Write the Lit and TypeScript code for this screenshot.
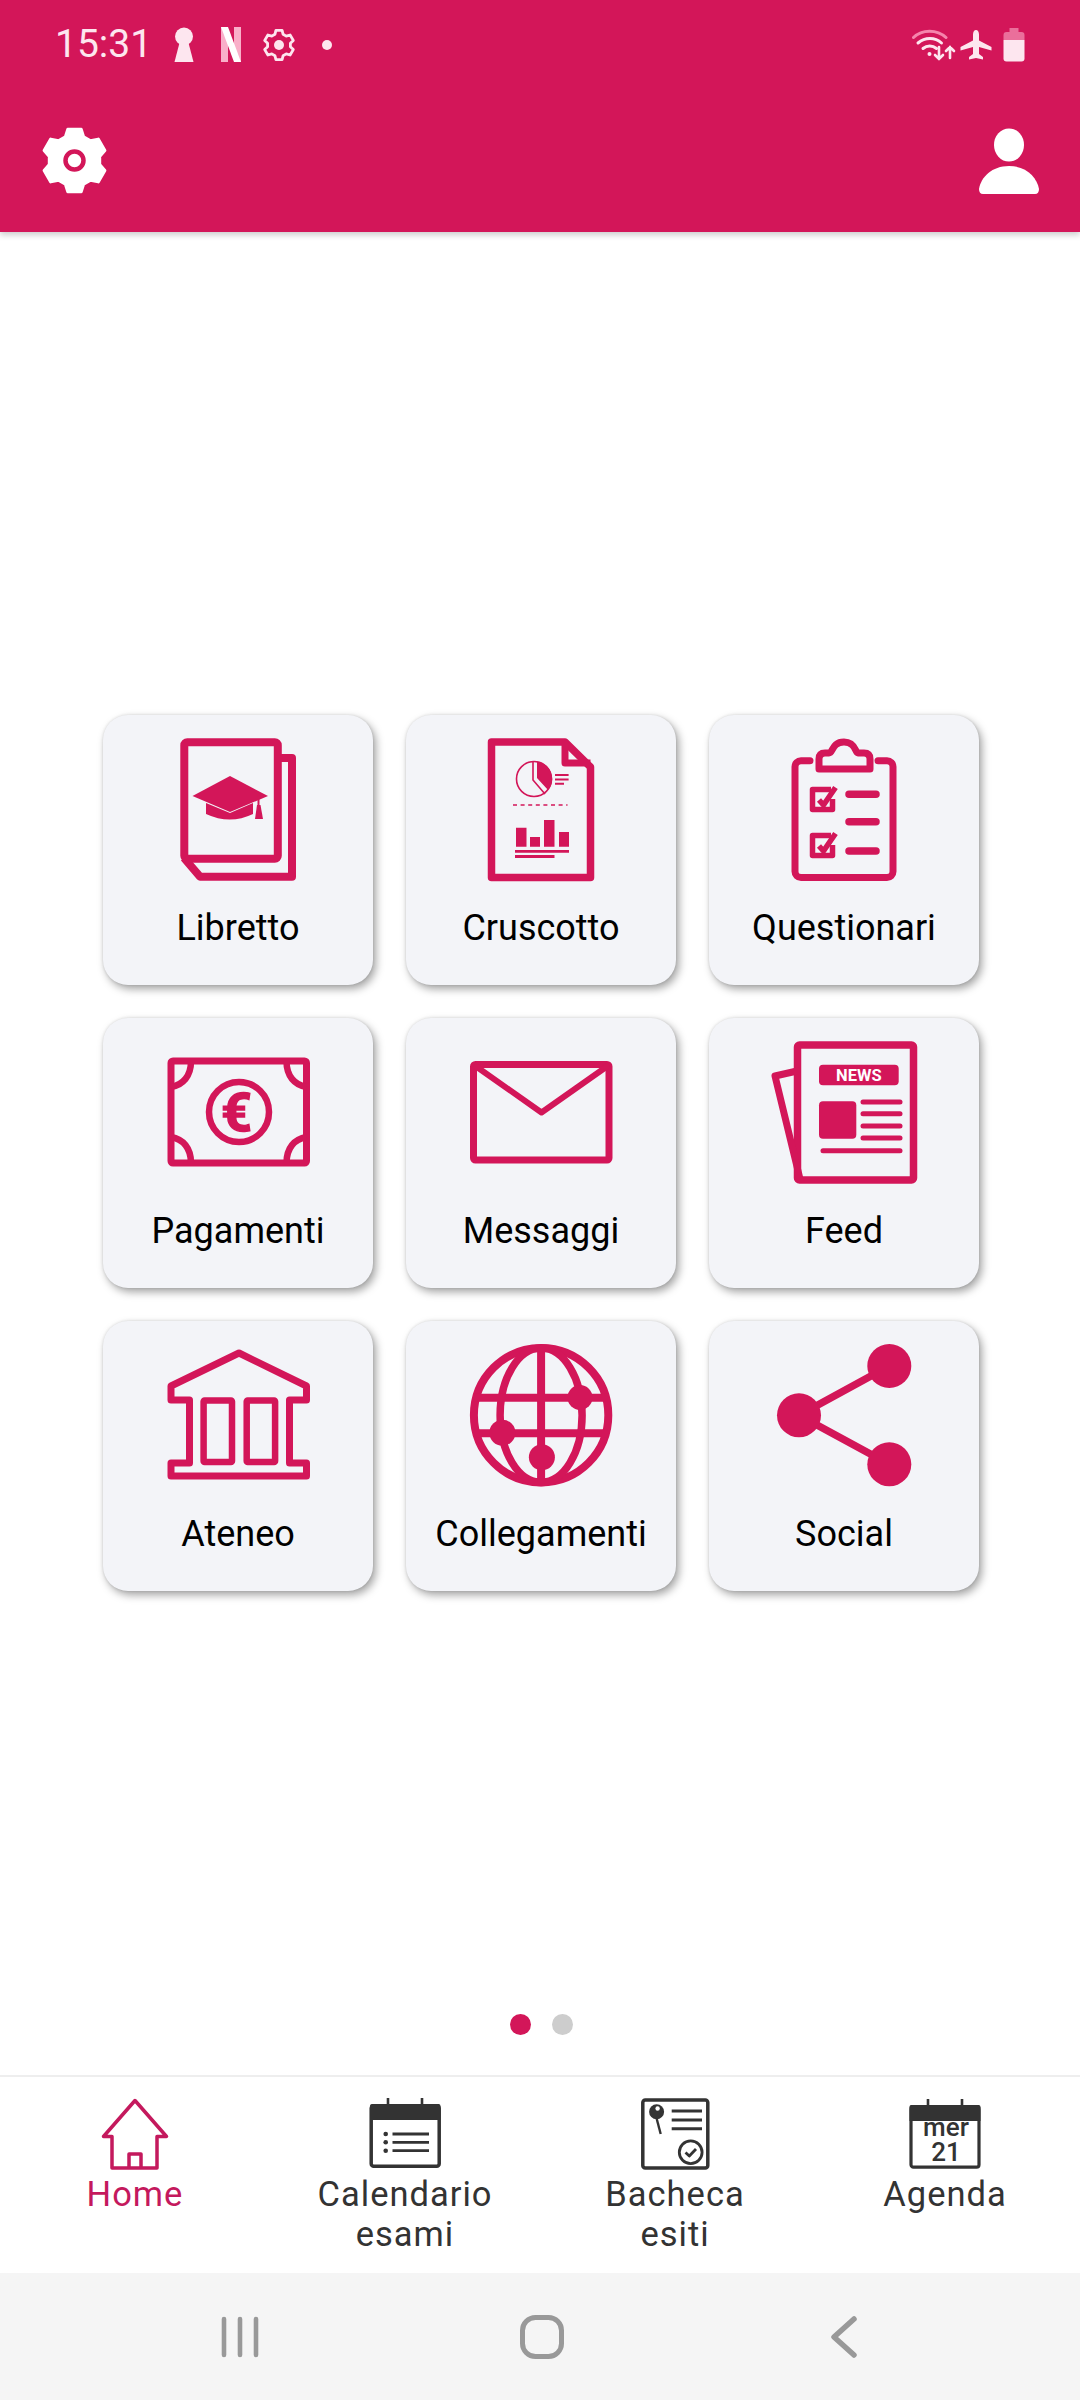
import { LitElement, html, css, svg } from 'lit';
import { customElement } from 'lit/decorators.js';

// six-lobed cog outline, used by the app bar and the status bar
function gearPath(cx: number, cy: number, tip: number, root: number) {
  const pts: string[] = [];
  for (let i = 0; i < 6; i++) {
    const a = -90 + i * 60;
    for (const [da, r] of [[-21, root], [-12, tip], [12, tip], [21, root]]) {
      const t = ((a + da) * Math.PI) / 180;
      pts.push(`${(cx + r * Math.cos(t)).toFixed(1)} ${(cy + r * Math.sin(t)).toFixed(1)}`);
    }
  }
  return 'M' + pts.join('L') + 'Z';
}

const liner = (x1: number, x2: number, y: number, w: number) =>
  svg`<path d="M${x1} ${y}H${x2}" stroke-width=${w} stroke-linecap="round" fill="none" />`;

const tiles = [
  {
    label: 'Libretto',
    icon: svg`
      <rect x="81.3" y="27.3" width="93.5" height="116.5" rx="3" class="o" stroke-width="8" />
      <path d="M178 43H189V161.7H97L81 143" class="o" stroke-width="8" />
      <path d="M127 61L165 81L127 97L89.5 81Z" class="f" />
      <path d="M103 88L127 98L150 88V99Q127 110 103 99Z" class="f" />
      <path d="M155.5 80V92" class="o" stroke-width="2" />
      <path d="M154 90H157.5L160 104H152Z" class="f" />`,
  },
  {
    label: 'Cruscotto',
    icon: svg`
      <path d="M159 27H85.5V162.5H184.5V52Z" class="o" stroke-width="7.5" />
      <path d="M159 27V48H184.5" class="o" stroke-width="7" />
      <circle cx="128" cy="64" r="17.5" class="o" stroke-width="1.6" />
      <path d="M131 46.5A17.5 17.5 0 0 1 142 75L131 63Z" class="f" />
      <path d="M127 47V65L139 79" class="o" stroke-width="1.6" />
      <path d="M149 60H162.6M149 64.5H162.6M149 68.7H158" class="o" stroke-width="2" />
      <path d="M107 90H161.5" class="o" stroke-width="1.4" stroke-dasharray="4 3.6" />
      <path d="M110 112.7H120.5V131.7H110ZM124 122H134V131.7H124ZM138 105H148.5V131.7H138ZM153 117H163V131.7H153Z" class="f" />
      <path d="M109 136.3H163M109 141.5H148.5" class="o" stroke-width="2.8" />`,
  },
  {
    label: 'Questionari',
    icon: svg`
      <path d="M101 45.8H92A6 6 0 0 0 86 51.8V156.5A6 6 0 0 0 92 162.5H178A6 6 0 0 0 184 156.5V51.8A6 6 0 0 0 178 45.8H169" class="o r" stroke-width="7" />
      <path d="M110 54H161V44Q161 38 155 38H149C146 38 147 27 135 27C123 27 124 38 120 38H116Q110 38 110 44Z" class="o r" stroke-width="7" />
      <path d="M122 74.5H103.5V94.5H123.5V84" class="o" stroke-width="5.5" />
      <path d="M110 85L114.5 90L126.5 72.5" class="o" stroke-width="5.5" />
      <path d="M122 120.5H103.5V140.5H123.5V130" class="o" stroke-width="5.5" />
      <path d="M110 131L114.5 136L126.5 118.5" class="o" stroke-width="5.5" />
      <path d="M140 79.3H167M140 106.7H167M140 136H167" class="o r" stroke-width="7.5" />`,
  },
  {
    label: 'Pagamenti',
    icon: svg`
      <rect x="68" y="43" width="135.5" height="102" rx="2" class="o" stroke-width="7" />
      <circle cx="136" cy="94" r="30" class="o" stroke-width="6.5" />
      <text x="133.5" y="112.5" text-anchor="middle" class="euro">€</text>
      <path d="M88 43C88 58 80 67 68 69M183.5 43C183.5 58 191.5 67 203.5 69M88 145C88 130 80 121 68 119M183.5 145C183.5 130 191.5 121 203.5 119" class="o" stroke-width="6.5" />`,
  },
  {
    label: 'Messaggi',
    icon: svg`
      <rect x="67.5" y="46.5" width="135.5" height="95.5" rx="2" class="o" stroke-width="7" />
      <path d="M68 47L135.5 94.5L203 47" class="o" stroke-width="6" />`,
  },
  {
    label: 'Feed',
    icon: svg`
      <rect x="88.5" y="27" width="116" height="135" rx="2" class="o" stroke-width="7.5" />
      <path d="M88 53L66 58L91 161" class="o r" stroke-width="7" />
      <rect x="110" y="46.7" width="79.7" height="20.6" rx="4" class="f" />
      <text x="149.8" y="63" text-anchor="middle" class="news">NEWS</text>
      <rect x="110" y="83.3" width="37.3" height="37.4" rx="4" class="f" />
      ${[84, 95.7, 108, 120].map((y) => liner(154, 191, y, 5))}
      ${liner(114, 191, 132.7, 5)}`,
  },
  {
    label: 'Ateneo',
    icon: svg`
      <path d="M136 32L203.5 65V79H186.5V142H203.5V155H68V142H86.5V79H68V65Z" class="o" stroke-width="7" />
      <rect x="100.6" y="79.5" width="28.4" height="61.5" rx="1" class="o" stroke-width="6.5" />
      <rect x="143.7" y="79.5" width="28.4" height="61.5" rx="1" class="o" stroke-width="6.5" />`,
  },
  {
    label: 'Collegamenti',
    icon: svg`
      <circle cx="135.1" cy="94.2" r="67.2" class="o" stroke-width="8" />
      <ellipse cx="135.1" cy="94.2" rx="41" ry="67.2" class="o" stroke-width="7.5" />
      <path d="M135.1 27V161M68 76.7H202M68 112.3H202" class="o" stroke-width="8" />
      <circle cx="174" cy="76.5" r="12.5" class="f" />
      <circle cx="96.4" cy="111.7" r="13" class="f" />
      <circle cx="135.9" cy="136.3" r="13" class="f" />`,
  },
  {
    label: 'Social',
    icon: svg`
      <path d="M180.3 45L90 94.3L180.3 143.3" class="o" stroke-width="7.5" />
      <circle cx="180.3" cy="45" r="22" class="f" />
      <circle cx="90" cy="94.3" r="22" class="f" />
      <circle cx="180.3" cy="143.3" r="22" class="f" />`,
  },
];

const navItems = [
  {
    label: ['Home'],
    active: true,
    icon: svg`
      <path d="M4.5 38.5L36 2.5L67.5 38.5H58V70H13V38.5Z" class="o" stroke-width="3.5" />
      <path d="M30 70V56H42V70" class="o" stroke-width="3.5" />`,
  },
  {
    label: ['Calendario', 'esami'],
    active: false,
    icon: svg`
      <path d="M19 0V8M53 0V8" class="o" stroke-width="2.6" />
      <rect x="2.2" y="7.7" width="68" height="60.5" rx="2.5" class="o" stroke-width="3.5" />
      <path d="M3 6H70A2 2 0 0 1 71.5 8V22H1V8A2 2 0 0 1 3 6Z" class="f" />
      <path d="M23.5 36H60M23.5 44.3H60M23.5 52.7H60" class="o" stroke-width="2.8" />
      <circle cx="16.7" cy="36" r="2.3" class="f" />
      <circle cx="16.7" cy="44.3" r="2.3" class="f" />
      <circle cx="16.7" cy="52.7" r="2.3" class="f" />`,
  },
  {
    label: ['Bacheca', 'esiti'],
    active: false,
    icon: svg`
      <rect x="3.8" y="2" width="65" height="68" rx="2.5" class="o" stroke-width="3.5" />
      <circle cx="17.6" cy="13.7" r="7.5" class="f" />
      <circle cx="18.6" cy="10.5" r="2.2" fill="#fff" />
      <path d="M17.5 20L21.7 36" class="o" stroke-width="2.4" />
      <path d="M32.7 13H63M32.7 22H63M32.7 30.7H63" class="o" stroke-width="3" />
      <circle cx="51.7" cy="54.3" r="11.4" class="o" stroke-width="2.8" />
      <path d="M46.5 54.5L50.3 58L57 51" class="o" stroke-width="2.8" />`,
  },
  {
    label: ['Agenda'],
    active: false,
    icon: svg`
      <path d="M19 1V9M53 1V9" class="o" stroke-width="2.6" />
      <rect x="2" y="8.7" width="68" height="60.5" rx="2.5" class="o" stroke-width="3.2" />
      <path d="M3 7H70A2 2 0 0 1 71.5 9V23H.5V9A2 2 0 0 1 3 7Z" class="f" />
      <text x="37" y="38" text-anchor="middle" class="cal">mer</text>
      <text x="37" y="63" text-anchor="middle" class="cal">21</text>`,
  },
];

@customElement('app-root')
export class AppRoot extends LitElement {
  static styles = css`
    :host {
      display: flex;
      flex-direction: column;
      width: 1080px;
      height: 2400px;
      background: #fff;
      font-family: Roboto, 'Liberation Sans', sans-serif;
      overflow: hidden;
    }

    svg {
      display: block;
      flex: none;
    }

    .topbar {
      height: 232px;
      flex: none;
      background: #d31659;
      box-shadow: 0 3px 6px rgba(0, 0, 0, 0.2);
      position: relative;
      box-sizing: border-box;
      padding: 27px 41px 0;
    }

    .status {
      display: flex;
      align-items: center;
      height: 35px;
      margin-right: 14px;
      margin-left: 14px;
      color: #fde6ef;
    }

    .time {
      font-size: 39px;
      line-height: 35px;
      width: 119px;
    }

    .status-gap {
      flex: 1;
    }

    .appbar {
      display: flex;
      justify-content: space-between;
      align-items: center;
      margin-top: 65px;
      height: 67px;
    }

    .grid {
      flex: 1;
      display: grid;
      grid-template-columns: repeat(3, 270px);
      grid-auto-rows: 270px;
      gap: 33px;
      justify-content: center;
      align-content: start;
      padding: 483px 0 0 2px;
    }

    .tile {
      background: #f3f4f8;
      border-radius: 25px;
      box-shadow: 3px 4px 8px rgba(0, 0, 0, 0.36), 0 0 3px rgba(0, 0, 0, 0.12);
      display: flex;
      flex-direction: column;
      align-items: center;
    }

    .tile span {
      font-size: 36px;
      line-height: 40px;
      color: #000;
      margin-top: 13px;
      white-space: nowrap;
    }

    .tile svg .f,
    .navitem svg .f {
      fill: currentColor;
    }

    .tile svg {
      color: #d31659;
      stroke: currentColor;
    }

    .f {
      stroke: none;
    }

    .o {
      fill: none;
      stroke: currentColor;
      stroke-linejoin: round;
    }

    .r {
      stroke-linecap: round;
    }

    .euro {
      font-size: 54px;
      font-weight: 700;
      fill: #d31659;
      stroke: #d31659;
      stroke-width: 1.4px;
    }

    .news {
      font-size: 16.5px;
      font-weight: 700;
      fill: #fff;
      stroke: none;
    }

    .cal {
      font-size: 26px;
      font-weight: 500;
      fill: #333;
    }

    .dots {
      display: flex;
      justify-content: center;
      gap: 21px;
      height: 21px;
      margin-bottom: 40px;
      padding-left: 2px;
    }

    .dots i {
      width: 21px;
      height: 21px;
      border-radius: 50%;
      background: #cdcdcd;
    }

    .dots i.on {
      background: #d31659;
    }

    .nav {
      flex: none;
      display: grid;
      grid-template-columns: repeat(4, 1fr);
      height: 196px;
      box-sizing: content-box;
      border-top: 2px solid #eee;
    }

    .navitem {
      display: flex;
      flex-direction: column;
      align-items: center;
      padding-top: 21px;
      color: #333;
    }

    .navitem.active {
      color: #c4195d;
    }

    .navitem span {
      font-size: 34.5px;
      line-height: 40px;
      letter-spacing: 1px;
      text-align: center;
      margin-top: 4px;
    }

    .sysnav {
      flex: none;
      height: 127px;
      background: #f5f5f5;
      display: grid;
      grid-template-columns: repeat(3, 302px);
      justify-content: center;
      justify-items: center;
      align-items: center;
      padding-left: 4px;
      color: #999;
    }
  `;

  render() {
    return html`
      <div class="topbar">
        <div class="status">
          <span class="time">15:31</span>
          <svg width="20" height="35" viewBox="0 0 20 35" fill="#fde6ef">
            <circle cx="10" cy="9.5" r="9" />
            <path d="M6.5 12H13.5L19.5 35H.5Z" />
          </svg>
          <svg width="20" height="35" viewBox="0 0 20 35" style="margin-left:27px">
            <path d="M0 0H7L7 35H0Z" fill="#f9afc9" />
            <path d="M13 0H20V35H13Z" fill="#f9afc9" />
            <path d="M0 0H7L20 35H13Z" fill="#fff" />
          </svg>
          <svg width="34" height="34" viewBox="0 0 34 34" style="margin-left:21px">
            <path d=${gearPath(17, 17, 15, 11.5)} fill="none" stroke="#fde6ef" stroke-width="2.8" stroke-linejoin="round" />
            <circle cx="17" cy="17" r="5" fill="#fde6ef" />
          </svg>
          <svg width="10" height="10" viewBox="0 0 10 10" style="margin-left:26px">
            <circle cx="5" cy="5" r="5" fill="#fde6ef" />
          </svg>
          <div class="status-gap"></div>
          <svg width="44" height="34" viewBox="0 0 44 34" fill="none" stroke="#fde6ef" stroke-linecap="round">
            <path d="M1.5 9.5C10 1 25 1 34 9.5" stroke="#f585ac" stroke-width="3" />
            <path d="M6 15C13 9 23 9 29.5 15M11 20.5C15 17 20.5 17 24.5 20.5" stroke-width="3" />
            <circle cx="17.5" cy="26" r="2" fill="#fde6ef" stroke="none" />
            <path d="M27 19V31M23 27L27 31L31 27M38 30V19M34 23L38 19L42 23" stroke-width="2.6" />
          </svg>
          <svg width="32" height="30" viewBox="0 0 32 30" fill="#fde6ef" style="margin-left:4px">
            <path d="M16 0C17.8 0 19 2 19 4.5V10.5L31.5 17V20.5L19 17V24L23 27V29.5L16 28L9 29.5V27L13 24V17L.5 20.5V17L13 10.5V4.5C13 2 14.2 0 16 0Z" />
          </svg>
          <svg width="22" height="34" viewBox="0 0 22 34" style="margin-left:11px">
            <path d="M6.5 0H15.5V4H18.5Q21.5 4 21.5 7V12H.5V7Q.5 4 3.5 4H6.5Z" fill="#ea6f9b" />
            <path d="M.5 12H21.5V30.5Q21.5 33.5 18.5 33.5H3.5Q.5 33.5 .5 30.5Z" fill="#fde6ef" />
          </svg>
        </div>
        <div class="appbar">
          <svg width="67" height="67" viewBox="0 0 67 67">
            <path d=${gearPath(33.5, 33.5, 32, 25.5)} fill="#fff" stroke="#fff" stroke-width="3" stroke-linejoin="round" />
            <circle cx="33.5" cy="33.5" r="9" fill="#fff" stroke="#d31659" stroke-width="4.5" />
          </svg>
          <svg width="60" height="67" viewBox="0 0 60 67" fill="#fff">
            <ellipse cx="30" cy="18" rx="15" ry="16.5" />
            <path d="M30 39C13 39 2 50 0 62Q0 67 4 67H56Q60 67 60 62C58 50 47 39 30 39Z" />
          </svg>
        </div>
      </div>

      <div class="grid">
        ${tiles.map(
          (t) => html`
            <div class="tile">
              <svg width="270" height="180" viewBox="0 0 270 180">${t.icon}</svg>
              <span>${t.label}</span>
            </div>
          `
        )}
      </div>

      <div class="dots"><i class="on"></i><i></i></div>

      <div class="nav">
        ${navItems.map(
          (n) => html`
            <div class="navitem ${n.active ? 'active' : ''}">
              <svg width="72" height="72" viewBox="0 0 72 72">${n.icon}</svg>
              <span>${n.label.map((l, i) => (i ? html`<br />${l}` : l))}</span>
            </div>
          `
        )}
      </div>

      <div class="sysnav">
        <svg width="44" height="42" viewBox="0 0 44 42" fill="none" stroke="currentColor" stroke-width="4.6" stroke-linecap="round">
          <path d="M6 3V39M22 3V39M38 3V39" />
        </svg>
        <svg width="44" height="44" viewBox="0 0 44 44" fill="none" stroke="currentColor" stroke-width="5">
          <rect x="2.5" y="2.5" width="39" height="39" rx="13" />
        </svg>
        <svg width="44" height="44" viewBox="0 0 44 44" fill="none" stroke="currentColor" stroke-width="5.5" stroke-linecap="round" stroke-linejoin="round">
          <path d="M32 4L12 22L32 40" />
        </svg>
      </div>
    `;
  }
}
